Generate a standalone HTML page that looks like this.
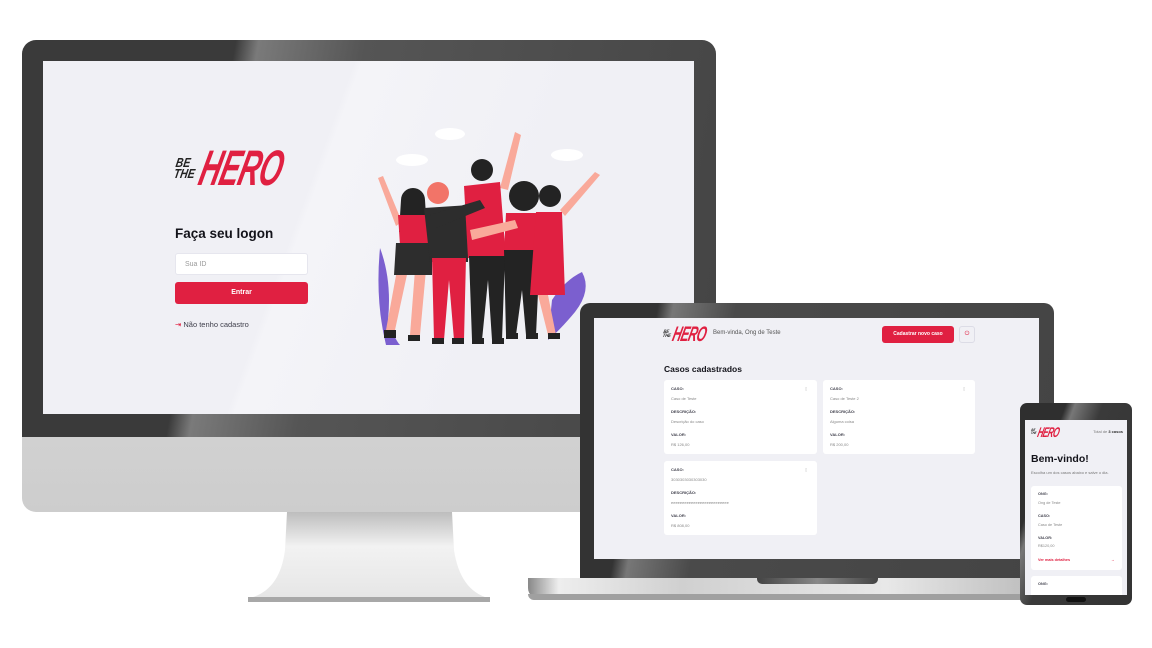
<!DOCTYPE html>
<html><head><meta charset="utf-8">
<style>
*{margin:0;padding:0;box-sizing:border-box}
body{width:1152px;height:648px;background:#fff;position:relative;overflow:hidden;font-family:"Liberation Sans",sans-serif}
.a{position:absolute}
.scr{background:#f0f0f5;overflow:hidden}
.logo{position:absolute;display:flex;align-items:center}
.logo .bt{font-weight:bold;font-style:italic;color:#222;line-height:.85;transform:skewX(-10deg) scaleX(.8)}
.logo .h{font-weight:bold;font-style:italic;color:#e02041;transform:skewX(-14deg) scaleX(.58);transform-origin:left center;letter-spacing:-1px;line-height:1}
.card{position:absolute;background:#fff;border-radius:3px}
.lb{position:absolute;font-weight:bold;color:#41414d}
.vl{position:absolute;color:#888}
</style></head><body>

<!-- MONITOR -->
<div class="a" style="left:22px;top:40px;width:694px;height:472px;border-radius:14px;background:linear-gradient(#e8e8e8,#cdcdcd);overflow:hidden">
 <div class="a" style="left:0;top:0;width:694px;height:397px;background:linear-gradient(100deg,#3a3a3a 0%,#3a3a3a 28%,#7a7a7a 31%,#555 45%,#444 100%)"></div>
</div>
<div class="a scr" style="left:43px;top:61px;width:651px;height:353px;background:linear-gradient(110deg,#f0f0f5 40%,#f4f4f8 41%,#f0f0f5 70%)">
 <div class="logo" style="left:132px;top:82px">
  <div class="bt" style="font-size:13px;transform-origin:left">BE<br>THE</div>
  <div class="h" style="font-size:50px;margin-left:0px">HERO</div>
 </div>
 <div class="a" style="left:132px;top:165px;font-size:13.5px;font-weight:bold;color:#13131a">Faça seu logon</div>
 <div class="a" style="left:132px;top:192px;width:133px;height:22px;background:#fff;border-radius:3px;border:1px solid #e6e6ee;font-size:7px;color:#999;padding:7px 9px">Sua ID</div>
 <div class="a" style="left:132px;top:221px;width:133px;height:22px;background:#e02041;border-radius:3px;font-size:7px;color:#fff;font-weight:bold;text-align:center;line-height:22px">Entrar</div>
 <div class="a" style="left:132px;top:259px;font-size:7.5px;color:#41414d"><span style="color:#e02041">⇥</span> Não tenho cadastro</div>
</div>
<!-- illustration -->
<svg class="a" style="left:0;top:0" width="720" height="400" viewBox="0 0 720 400">
 <g fill="#fff"><ellipse cx="450" cy="134" rx="15" ry="6"/><ellipse cx="412" cy="160" rx="16" ry="6"/><ellipse cx="567" cy="155" rx="16" ry="6"/></g>
 <g fill="#7b5fcf"><path d="M380 248 Q392 280 388 320 Q395 340 400 345 L386 345 Q375 300 380 248Z"/><path d="M582 272 Q592 290 575 312 Q560 330 548 340 L552 300 Q565 280 582 272Z"/></g>
 <g fill="#f9a99a"><path d="M378 178 L383 176 L402 222 L396 226Z"/><path d="M515 132 L521 135 L508 190 L500 188Z"/><path d="M600 175 L595 172 L560 210 L565 216Z"/>
  <path d="M397 270 L408 270 L395 330 L386 330Z"/><path d="M415 270 L426 270 L420 335 L410 335Z"/></g>
 <circle cx="413" cy="200" r="12" fill="#232323"/><path d="M401 200 L425 200 L427 232 L399 232Z" fill="#232323"/>
 <path d="M398 215 L430 215 L428 245 L400 245Z" fill="#e02041"/>
 <path d="M396 243 L432 243 L432 275 L394 275Z" fill="#2d2d2d"/>
 <circle cx="438" cy="193" r="11" fill="#f27468"/>
 <path d="M424 208 L470 205 L468 262 L430 262Z" fill="#2d2d2d"/>
 <path d="M432 258 L466 258 L464 340 L454 340 L449 280 L444 340 L434 340Z" fill="#e02041"/>
 <circle cx="482" cy="170" r="11" fill="#232323"/>
 <path d="M464 186 L500 182 L506 258 L468 258Z" fill="#e02041"/>
 <path d="M469 256 L505 256 L502 340 L492 340 L488 280 L482 340 L472 340Z" fill="#232323"/>
 <path d="M430 215 L480 200 L485 208 L436 228Z" fill="#2d2d2d"/>
 <circle cx="524" cy="196" r="15" fill="#232323"/>
 <path d="M506 213 L544 213 L546 252 L504 252Z" fill="#e02041"/>
 <path d="M504 250 L540 250 L536 335 L526 335 L522 290 L516 335 L506 335Z" fill="#232323"/>
 <path d="M470 230 L515 220 L518 228 L472 240Z" fill="#f9a99a"/>
 <circle cx="550" cy="196" r="11" fill="#232323"/>
 <path d="M536 212 L562 212 L565 295 L530 295Z" fill="#e02041"/>
 <path d="M538 295 L548 295 L556 335 L548 335Z" fill="#f9a99a"/>
 <g fill="#232323"><rect x="384" y="330" width="12" height="8"/><rect x="408" y="335" width="12" height="6"/><rect x="432" y="338" width="12" height="6"/><rect x="452" y="338" width="12" height="6"/><rect x="472" y="338" width="12" height="6"/><rect x="492" y="338" width="12" height="6"/><rect x="506" y="333" width="12" height="6"/><rect x="526" y="333" width="12" height="6"/><rect x="548" y="333" width="12" height="6"/></g>
</svg>
<!-- stand -->
<svg class="a" style="left:240px;top:510px" width="260" height="100">
 <defs><linearGradient id="st" x1="0" x2="0" y1="0" y2="1"><stop offset="0" stop-color="#bdbdbd"/><stop offset=".4" stop-color="#f2f2f2"/><stop offset="1" stop-color="#e6e6e6"/></linearGradient></defs>
 <path d="M47 2 L212 2 L214 40 Q220 80 248 88 L10 88 Q40 80 45 40Z" fill="url(#st)"/>
 <rect x="8" y="87" width="242" height="5" fill="#a8a8a8"/>
</svg>

<!-- LAPTOP -->
<div class="a" style="left:580px;top:303px;width:474px;height:277px;border-radius:10px 10px 0 0;background:linear-gradient(100deg,#333 0%,#333 15%,#777 18%,#4a4a4a 30%,#444 100%)"></div>
<div class="a scr" style="left:594px;top:318px;width:445px;height:241px">
 <div class="logo" style="left:69px;top:6px"><div class="bt" style="font-size:5px;transform-origin:left">BE<br>THE</div><div class="h" style="font-size:21px">HERO</div></div>
 <div class="a" style="left:119px;top:12px;font-size:6px;color:#555">Bem-vinda, Ong de Teste</div>
 <div class="a" style="left:288px;top:8px;width:72px;height:17px;background:#e02041;border-radius:3px;color:#fff;font-size:5px;font-weight:bold;text-align:center;line-height:17px">Cadastrar novo caso</div>
 <div class="a" style="left:365px;top:8px;width:16px;height:17px;border:1px solid #dcdce6;border-radius:3px;color:#e02041;font-size:6px;text-align:center;line-height:15px">⏻</div>
 <div class="a" style="left:70px;top:46px;font-size:8.5px;font-weight:bold;color:#13131a">Casos cadastrados</div>
 <div class="card" style="left:70px;top:62px;width:153px;height:74px"></div>
 <div class="card" style="left:229px;top:62px;width:152px;height:74px"></div>
 <div class="card" style="left:70px;top:143px;width:153px;height:74px"></div>
</div>
<div class="a" style="left:0;top:0;width:1152px;height:648px;font-size:4px">
 <div class="lb" style="left:671px;top:386px">CASO:</div><div class="vl" style="left:671px;top:396px">Caso de Teste</div>
 <div class="lb" style="left:671px;top:409px">DESCRIÇÃO:</div><div class="vl" style="left:671px;top:419px">Descrição do caso</div>
 <div class="lb" style="left:671px;top:432px">VALOR:</div><div class="vl" style="left:671px;top:442px">R$ 126,00</div>
 <div class="lb" style="left:830px;top:386px">CASO:</div><div class="vl" style="left:830px;top:396px">Caso de Teste 2</div>
 <div class="lb" style="left:830px;top:409px">DESCRIÇÃO:</div><div class="vl" style="left:830px;top:419px">Alguma coisa</div>
 <div class="lb" style="left:830px;top:432px">VALOR:</div><div class="vl" style="left:830px;top:442px">R$ 200,00</div>
 <div class="lb" style="left:671px;top:467px">CASO:</div><div class="vl" style="left:671px;top:477px">3030303030303030</div>
 <div class="lb" style="left:671px;top:490px">DESCRIÇÃO:</div><div class="vl" style="left:671px;top:500px">eeeeeeeeeeeeeeeeeeeeeeeeee</div>
 <div class="lb" style="left:671px;top:513px">VALOR:</div><div class="vl" style="left:671px;top:523px">R$ 808,00</div>
 <div class="vl" style="left:805px;top:386px;color:#bbb">▯</div><div class="vl" style="left:963px;top:386px;color:#bbb">▯</div><div class="vl" style="left:805px;top:467px;color:#bbb">▯</div>
</div>
<div class="a" style="left:528px;top:578px;width:512px;height:22px;border-radius:0 0 14px 14px/0 0 12px 12px;background:linear-gradient(90deg,#888 0%,#eee 6%,#d0d0d0 30%,#e8e8e8 70%,#bbb 100%)"></div>
<div class="a" style="left:528px;top:594px;width:512px;height:6px;border-radius:0 0 14px 14px;background:#a0a0a0"></div>
<div class="a" style="left:757px;top:578px;width:121px;height:6px;border-radius:0 0 5px 5px;background:linear-gradient(90deg,#444,#888,#444)"></div>

<!-- PHONE -->
<div class="a" style="left:1020px;top:403px;width:112px;height:202px;border-radius:7px;background:linear-gradient(110deg,#2f2f2f 0%,#2f2f2f 25%,#777 30%,#3a3a3a 45%,#333 100%)"></div>
<div class="a scr" style="left:1025px;top:420px;width:102px;height:175px">
 <div class="logo" style="left:6px;top:5px"><div class="bt" style="font-size:3.5px;transform-origin:left">BE<br>THE</div><div class="h" style="font-size:14px">HERO</div></div>
 <div class="a" style="right:4px;top:9px;font-size:4px;color:#777">Total de <b style="color:#333">3 casos</b></div>
 <div class="a" style="left:6px;top:33px;font-size:10.5px;font-weight:bold;color:#13131a">Bem-vindo!</div>
 <div class="a" style="left:6px;top:50px;font-size:4px;color:#777;white-space:nowrap">Escolha um dos casos abaixo e salve o dia.</div>
 <div class="card" style="left:6px;top:66px;width:91px;height:84px"></div>
 <div class="card" style="left:6px;top:156px;width:91px;height:30px"></div>
 <div class="a" style="left:0;top:0;width:102px;font-size:3.8px">
  <div class="lb" style="left:13px;top:72px">ONG:</div><div class="vl" style="left:13px;top:81px">Ong de Teste</div>
  <div class="lb" style="left:13px;top:94px">CASO:</div><div class="vl" style="left:13px;top:103px">Caso de Teste</div>
  <div class="lb" style="left:13px;top:116px">VALOR:</div><div class="vl" style="left:13px;top:124px">R$120,00</div>
  <div class="lb" style="left:13px;top:138px;color:#e02041">Ver mais detalhes</div><div class="lb" style="left:86px;top:138px;color:#e02041">→</div>
  <div class="lb" style="left:13px;top:162px">ONG:</div>
 </div>
</div>
<div class="a" style="left:1066px;top:597px;width:20px;height:5px;border-radius:3px;background:#111"></div>
</body></html>
